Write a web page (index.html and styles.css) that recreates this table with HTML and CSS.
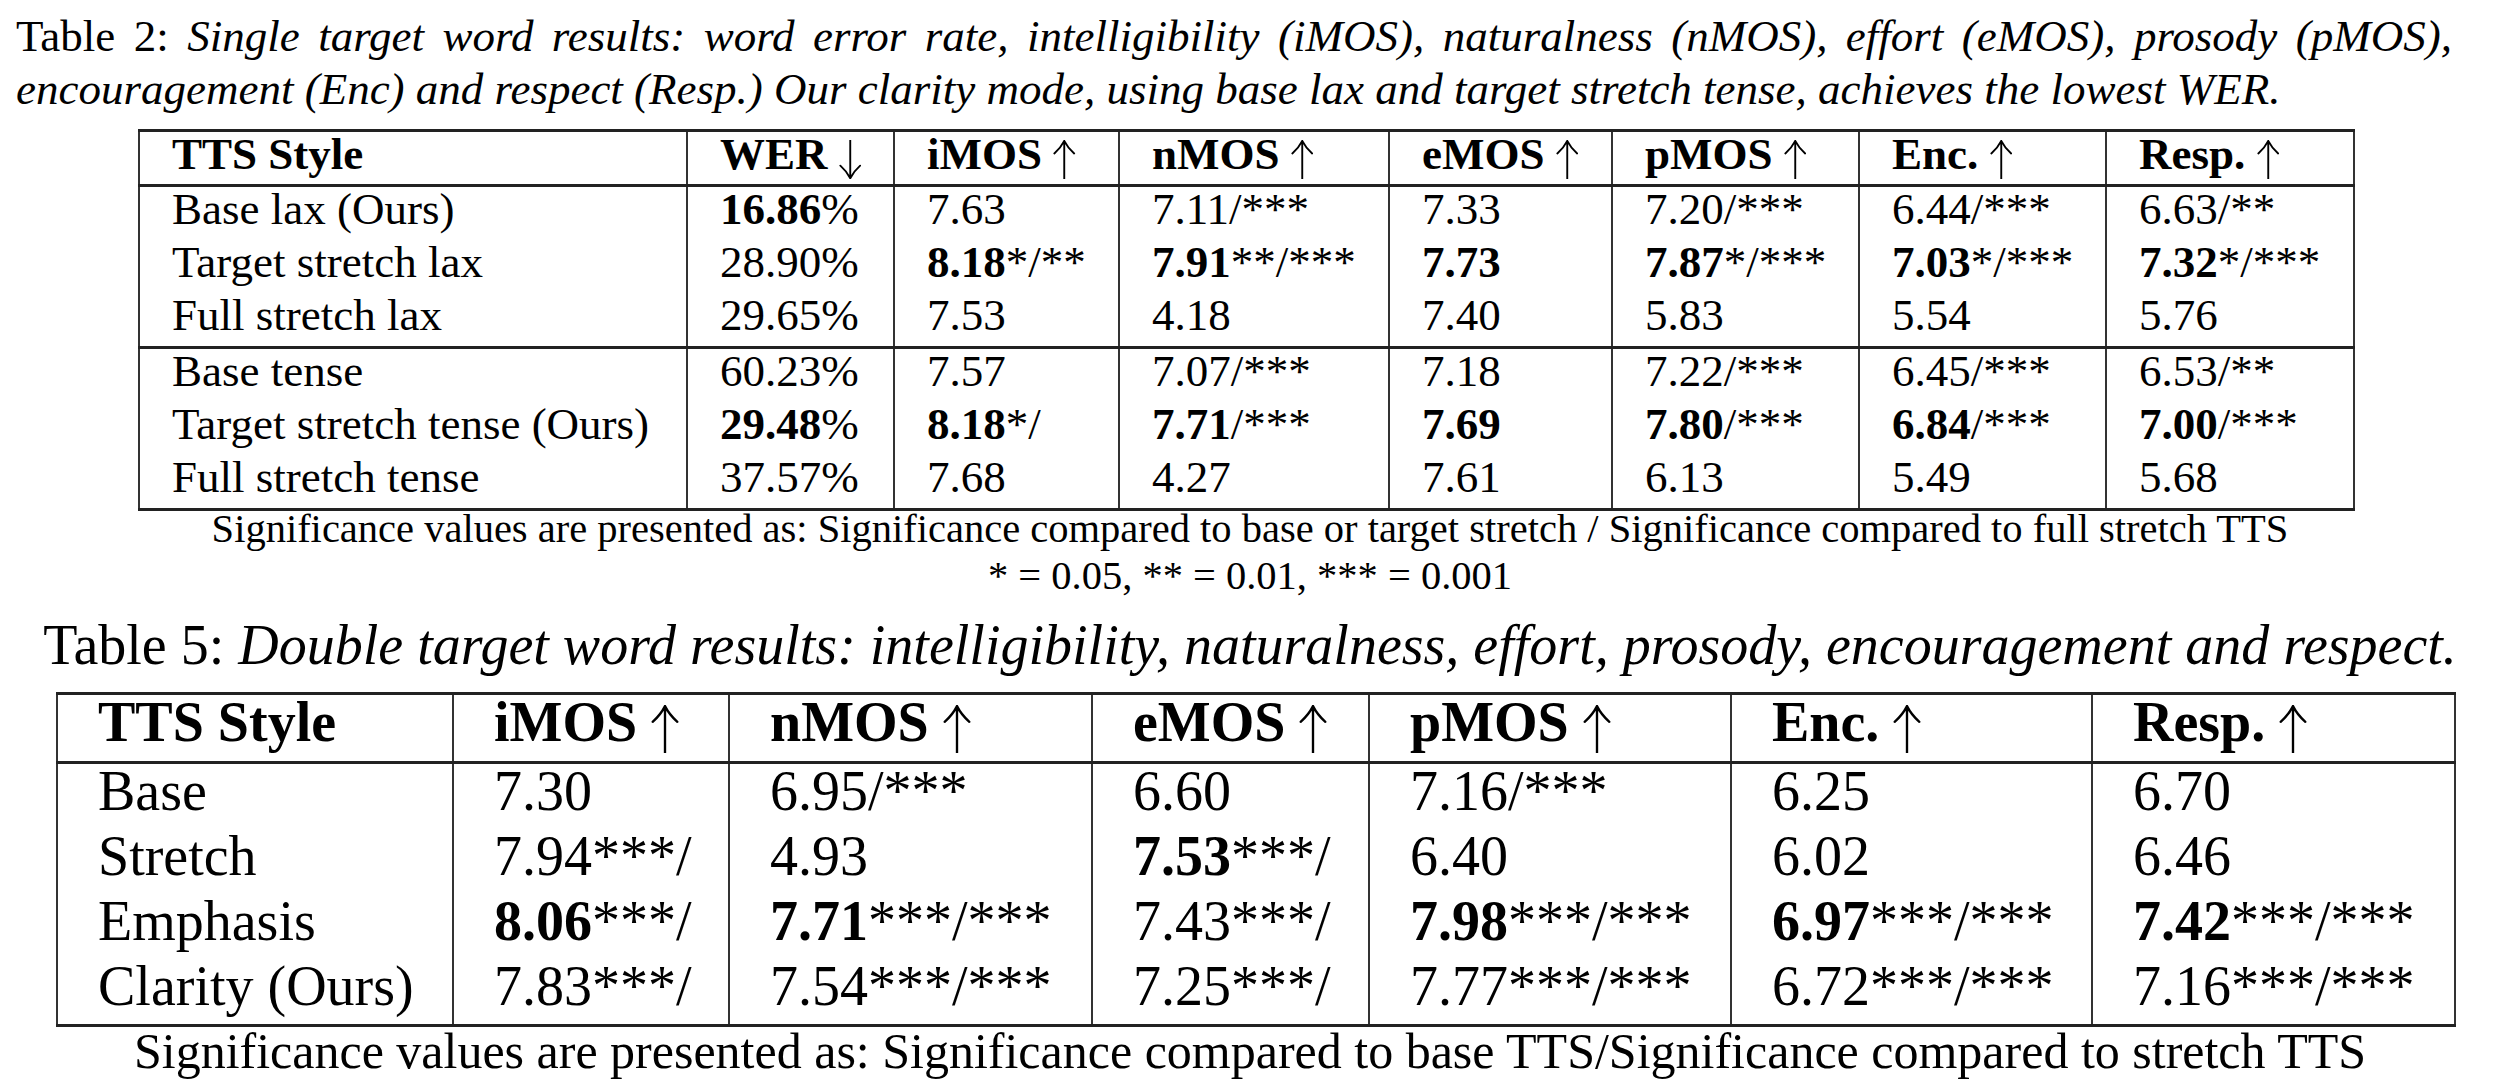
FILE: index.html
```html
<!DOCTYPE html>
<html>
<head>
<meta charset="utf-8">
<link rel="stylesheet" href="styles.css">
</head>
<body>
<div class="page">
  <div class="caption caption-one">
    <div class="cap-line justified">Table 2: <i>Single target word results: word error rate, intelligibility (iMOS), naturalness (nMOS), effort (eMOS), prosody (pMOS),</i></div>
    <div class="cap-line"><i>encouragement (Enc) and respect (Resp.) Our clarity mode, using base lax and target stretch tense, achieves the lowest WER.</i></div>
  </div>

  <table class="results results-one">
    <colgroup>
      <col style="width:548px"><col style="width:207px"><col style="width:225px"><col style="width:270px">
      <col style="width:223px"><col style="width:247px"><col style="width:247px"><col style="width:248px">
    </colgroup>
    <thead>
      <tr>
        <th>TTS Style</th>
        <th>WER <svg class="arrow" viewBox="0 0 50 87"><path d="M25 0 V85 M3 57 C12 65 20 75 25 85 C30 75 38 65 47 57"/></svg></th>
        <th>iMOS <svg class="arrow" viewBox="0 0 50 87"><path d="M25 87 V2 M3 30 C12 22 20 12 25 2 C30 12 38 22 47 30"/></svg></th>
        <th>nMOS <svg class="arrow" viewBox="0 0 50 87"><path d="M25 87 V2 M3 30 C12 22 20 12 25 2 C30 12 38 22 47 30"/></svg></th>
        <th>eMOS <svg class="arrow" viewBox="0 0 50 87"><path d="M25 87 V2 M3 30 C12 22 20 12 25 2 C30 12 38 22 47 30"/></svg></th>
        <th>pMOS <svg class="arrow" viewBox="0 0 50 87"><path d="M25 87 V2 M3 30 C12 22 20 12 25 2 C30 12 38 22 47 30"/></svg></th>
        <th>Enc. <svg class="arrow" viewBox="0 0 50 87"><path d="M25 87 V2 M3 30 C12 22 20 12 25 2 C30 12 38 22 47 30"/></svg></th>
        <th>Resp. <svg class="arrow" viewBox="0 0 50 87"><path d="M25 87 V2 M3 30 C12 22 20 12 25 2 C30 12 38 22 47 30"/></svg></th>
      </tr>
    </thead>
    <tbody>
      <tr><td>Base lax (Ours)</td><td><b>16.86</b>%</td><td>7.63</td><td>7.11/***</td><td>7.33</td><td>7.20/***</td><td>6.44/***</td><td>6.63/**</td></tr>
      <tr><td>Target stretch lax</td><td>28.90%</td><td><b>8.18</b>*/**</td><td><b>7.91</b>**/***</td><td><b>7.73</b></td><td><b>7.87</b>*/***</td><td><b>7.03</b>*/***</td><td><b>7.32</b>*/***</td></tr>
      <tr><td>Full stretch lax</td><td>29.65%</td><td>7.53</td><td>4.18</td><td>7.40</td><td>5.83</td><td>5.54</td><td>5.76</td></tr>
      <tr class="group-start"><td>Base tense</td><td>60.23%</td><td>7.57</td><td>7.07/***</td><td>7.18</td><td>7.22/***</td><td>6.45/***</td><td>6.53/**</td></tr>
      <tr><td>Target stretch tense (Ours)</td><td><b>29.48</b>%</td><td><b>8.18</b>*/</td><td><b>7.71</b>/***</td><td><b>7.69</b></td><td><b>7.80</b>/***</td><td><b>6.84</b>/***</td><td><b>7.00</b>/***</td></tr>
      <tr><td>Full stretch tense</td><td>37.57%</td><td>7.68</td><td>4.27</td><td>7.61</td><td>6.13</td><td>5.49</td><td>5.68</td></tr>
    </tbody>
  </table>

  <div class="note note-one">
    <div>Significance values are presented as: Significance compared to base or target stretch / Significance compared to full stretch TTS</div>
    <div>* = 0.05, ** = 0.01, *** = 0.001</div>
  </div>

  <div class="caption caption-two">Table 5: <i>Double target word results: intelligibility, naturalness, effort, prosody, encouragement and respect.</i></div>

  <table class="results results-two">
    <colgroup>
      <col style="width:396px"><col style="width:276px"><col style="width:363px"><col style="width:277px">
      <col style="width:362px"><col style="width:361px"><col style="width:363px">
    </colgroup>
    <thead>
      <tr>
        <th>TTS Style</th>
        <th>iMOS <svg class="arrow" viewBox="0 0 50 87"><path d="M25 87 V2 M3 30 C12 22 20 12 25 2 C30 12 38 22 47 30"/></svg></th>
        <th>nMOS <svg class="arrow" viewBox="0 0 50 87"><path d="M25 87 V2 M3 30 C12 22 20 12 25 2 C30 12 38 22 47 30"/></svg></th>
        <th>eMOS <svg class="arrow" viewBox="0 0 50 87"><path d="M25 87 V2 M3 30 C12 22 20 12 25 2 C30 12 38 22 47 30"/></svg></th>
        <th>pMOS <svg class="arrow" viewBox="0 0 50 87"><path d="M25 87 V2 M3 30 C12 22 20 12 25 2 C30 12 38 22 47 30"/></svg></th>
        <th>Enc. <svg class="arrow" viewBox="0 0 50 87"><path d="M25 87 V2 M3 30 C12 22 20 12 25 2 C30 12 38 22 47 30"/></svg></th>
        <th>Resp. <svg class="arrow" viewBox="0 0 50 87"><path d="M25 87 V2 M3 30 C12 22 20 12 25 2 C30 12 38 22 47 30"/></svg></th>
      </tr>
    </thead>
    <tbody>
      <tr><td>Base</td><td>7.30</td><td>6.95/***</td><td>6.60</td><td>7.16/***</td><td>6.25</td><td>6.70</td></tr>
      <tr><td>Stretch</td><td>7.94***/</td><td>4.93</td><td><b>7.53</b>***/</td><td>6.40</td><td>6.02</td><td>6.46</td></tr>
      <tr><td>Emphasis</td><td><b>8.06</b>***/</td><td><b>7.71</b>***/***</td><td>7.43***/</td><td><b>7.98</b>***/***</td><td><b>6.97</b>***/***</td><td><b>7.42</b>***/***</td></tr>
      <tr><td>Clarity (Ours)</td><td>7.83***/</td><td>7.54***/***</td><td>7.25***/</td><td>7.77***/***</td><td>6.72***/***</td><td>7.16***/***</td></tr>
    </tbody>
  </table>

  <div class="note note-two">Significance values are presented as: Significance compared to base TTS/Significance compared to stretch TTS</div>
</div>
</body>
</html>
```

FILE: styles.css
```css
html, body {
  margin: 0;
  padding: 0;
  background: #ffffff;
}

body {
  font-family: "Liberation Serif", "Times New Roman", serif;
  color: #000000;
}

.page {
  width: 2500px;
  height: 1089px;
  overflow: hidden;
}

.caption-one {
  margin: 10px 0 0 16px;
  width: 2436px;
  font-size: 45px;
  line-height: 53px;
}

.cap-line {
  white-space: nowrap;
}

.justified {
  text-align: justify;
  text-align-last: justify;
  white-space: normal;
}

.results {
  border-collapse: collapse;
  table-layout: fixed;
  border-top: 3px solid #222;
  border-bottom: 3px solid #222;
  border-left: 2px solid #333;
  border-right: 2px solid #333;
}

.results th,
.results td {
  text-align: left;
  white-space: nowrap;
  vertical-align: top;
  border-left: 2px solid #333;
  border-right: 2px solid #333;
}

.results th {
  font-weight: bold;
  border-bottom: 3px solid #222;
}

.results b {
  font-weight: bold;
}

.arrow {
  display: inline-block;
  width: 0.5em;
  height: 0.87em;
  margin: -0.2em 0;
  vertical-align: -0.02em;
  fill: none;
  stroke: #000;
  stroke-width: 4.2;
  stroke-linecap: round;
}

.results-one {
  margin: 13px 0 0 138px;
  width: 2215px;
  font-size: 45px;
}

.results-one th {
  line-height: 44px;
  padding: 0 0 8px 32px;
}

.results-one td {
  line-height: 44px;
  padding: 0 0 9px 32px;
}

.results-one .group-start td {
  border-top: 3px solid #222;
}

.note-one {
  margin-top: -6px;
  text-align: center;
  font-size: 40.5px;
  line-height: 47px;
}

.caption-two {
  margin-top: 15px;
  text-align: center;
  font-size: 56px;
  line-height: 62px;
}

.results-two {
  margin: 16px 0 0 56px;
  width: 2398px;
  font-size: 56px;
}

.results-two th {
  line-height: 54px;
  padding: 0 0 12px 40px;
}

.results-two td {
  line-height: 54px;
  padding: 0 0 11px 40px;
}

.note-two {
  margin-top: -1px;
  text-align: center;
  font-size: 50px;
  line-height: 50px;
}
```
